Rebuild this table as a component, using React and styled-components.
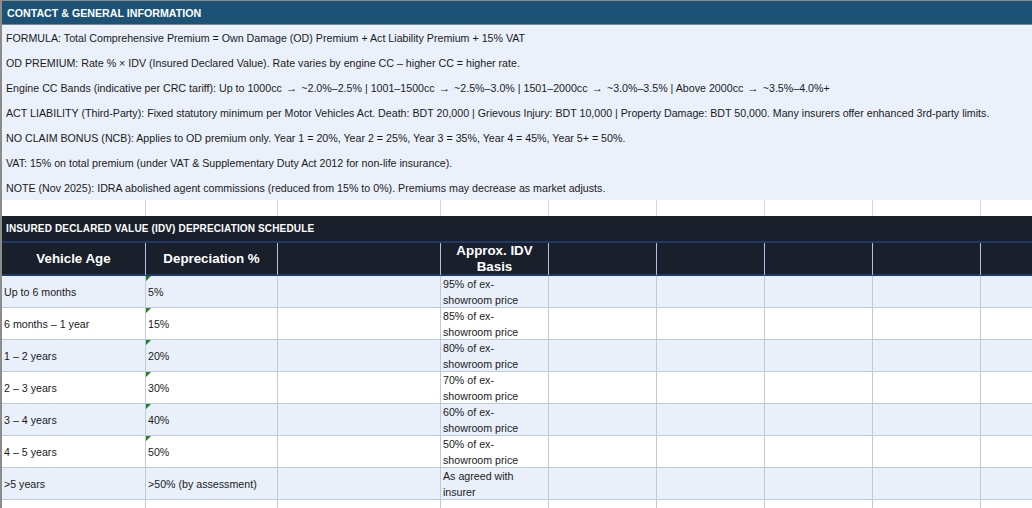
import React from 'react';
import styled, { createGlobalStyle } from 'styled-components';

const GlobalStyle = createGlobalStyle`
  html, body {
    margin: 0;
    padding: 0;
    background: #ffffff;
    overflow: hidden;
  }
  body {
    font-family: "Liberation Sans", Arial, sans-serif;
    color: #1a1a1a;
  }
`;

const Viewport = styled.div`
  width: 1032px;
  height: 508px;
  overflow: hidden;
`;

const Sheet = styled.div`
  display: grid;
  grid-template-columns: 144px 132px 163px repeat(6, 108px);
  width: max-content;
  border-left: 2px solid #8c8c8c;
  border-top: 1px solid #8c8c8c;
`;

const SectionTitle = styled.div`
  grid-column: 1 / -1;
  box-sizing: border-box;
  display: flex;
  align-items: center;
  padding-left: ${p => (p.$dark ? '4px' : '5px')};
  height: ${p => (p.$dark ? '27px' : '24px')};
  background: ${p => (p.$dark ? '#19202b' : '#1b5276')};
  border-bottom: ${p => (p.$dark ? '2px solid #1f3a66' : '1px solid #7d8a94')};
  color: #ffffff;
  font-weight: bold;
  font-size: ${p => (p.$dark ? '10px' : '10.67px')};
  letter-spacing: ${p => (p.$dark ? '0.15px' : '0')};
  white-space: nowrap;
`;

const InfoLine = styled.div`
  grid-column: 1 / -1;
  height: 25px;
  display: flex;
  align-items: center;
  padding-left: 4px;
  background: #eaf1fb;
  font-size: 10.67px;
  white-space: pre;
`;

// the arrow in the sheet renders a bit wider than the stock glyph
const Arrow = styled.span`
  font-size: 11.5px;
  margin: 0 1px;
`;

const SpacerCell = styled.div`
  box-sizing: border-box;
  height: 16px;
  background: #ffffff;
  border-right: 1px solid #d4d4d4;
`;

const HeaderCell = styled.div`
  box-sizing: border-box;
  height: 33px;
  display: flex;
  align-items: center;
  justify-content: center;
  text-align: center;
  background: #19202b;
  border-right: 1px solid #a9c4e6;
  border-bottom: 2px solid #1f3a66;
  color: #ffffff;
  font-weight: bold;
  font-size: 13.33px;
  line-height: 16px;
`;

const DataCell = styled.div`
  position: relative;
  box-sizing: border-box;
  height: 32px;
  display: flex;
  align-items: center;
  padding-left: 2px;
  padding-right: ${p => (p.$wrap ? '8px' : '0')};
  background: ${p => (p.$alt ? '#e9f0fa' : '#ffffff')};
  border-right: 1px solid #b8cce4;
  border-bottom: 1px solid #b8cce4;
  font-size: 10.67px;
  line-height: 16px;
  white-space: ${p => (p.$wrap ? 'normal' : 'nowrap')};

  ${p =>
    p.$flag &&
    `
    &::before {
      content: '';
      position: absolute;
      top: 0;
      left: 0;
      border-top: 5px solid #1e7f1e;
      border-right: 5px solid transparent;
    }
  `}
`;

const info = [
  'FORMULA: Total Comprehensive Premium = Own Damage (OD) Premium + Act Liability Premium + 15% VAT',
  'OD PREMIUM: Rate % × IDV (Insured Declared Value). Rate varies by engine CC – higher CC = higher rate.',
  'Engine CC Bands (indicative per CRC tariff): Up to 1000cc → ~2.0%–2.5% | 1001–1500cc → ~2.5%–3.0% | 1501–2000cc → ~3.0%–3.5% | Above 2000cc → ~3.5%–4.0%+',
  'ACT LIABILITY (Third-Party): Fixed statutory minimum per Motor Vehicles Act. Death: BDT 20,000 | Grievous Injury: BDT 10,000 | Property Damage: BDT 50,000. Many insurers offer enhanced 3rd-party limits.',
  'NO CLAIM BONUS (NCB): Applies to OD premium only. Year 1 = 20%, Year 2 = 25%, Year 3 = 35%, Year 4 = 45%, Year 5+ = 50%.',
  'VAT: 15% on total premium (under VAT & Supplementary Duty Act 2012 for non-life insurance).',
  'NOTE (Nov 2025): IDRA abolished agent commissions (reduced from 15% to 0%). Premiums may decrease as market adjusts.',
];

const schedule = [
  { age: 'Up to 6 months', dep: '5%', basis: '95% of ex-showroom price', flag: true },
  { age: '6 months – 1 year', dep: '15%', basis: '85% of ex-showroom price', flag: true },
  { age: '1 – 2 years', dep: '20%', basis: '80% of ex-showroom price', flag: true },
  { age: '2 – 3 years', dep: '30%', basis: '70% of ex-showroom price', flag: true },
  { age: '3 – 4 years', dep: '40%', basis: '60% of ex-showroom price', flag: true },
  { age: '4 – 5 years', dep: '50%', basis: '50% of ex-showroom price', flag: true },
  { age: '>5 years', dep: '>50% (by assessment)', basis: 'As agreed with insurer', flag: false },
  { age: '', dep: '', basis: '', flag: false },
];

const COLS = 9;
const blanks = n => Array.from({ length: n }, (_, i) => i);

const withArrows = text =>
  text.split('→').flatMap((part, i) => (i === 0 ? [part] : [<Arrow key={i}>→</Arrow>, part]));

const App = () => (
  <Viewport>
    <GlobalStyle />
    <Sheet>
      <SectionTitle>CONTACT &amp; GENERAL INFORMATION</SectionTitle>
      {info.map(line => (
        <InfoLine key={line}>{withArrows(line)}</InfoLine>
      ))}

      {blanks(COLS).map(i => (
        <SpacerCell key={`s${i}`} />
      ))}

      <SectionTitle $dark>INSURED DECLARED VALUE (IDV) DEPRECIATION SCHEDULE</SectionTitle>

      <HeaderCell>Vehicle Age</HeaderCell>
      <HeaderCell>Depreciation %</HeaderCell>
      <HeaderCell />
      <HeaderCell>
        Approx. IDV
        <br />
        Basis
      </HeaderCell>
      {blanks(COLS - 4).map(i => (
        <HeaderCell key={`h${i}`} />
      ))}

      {schedule.map((row, r) => {
        const alt = r % 2 === 0;
        return (
          <React.Fragment key={r}>
            <DataCell $alt={alt}>{row.age}</DataCell>
            <DataCell $alt={alt} $flag={row.flag}>
              {row.dep}
            </DataCell>
            <DataCell $alt={alt} />
            <DataCell $alt={alt} $wrap>
              {row.basis}
            </DataCell>
            {blanks(COLS - 4).map(i => (
              <DataCell $alt={alt} key={`d${i}`} />
            ))}
          </React.Fragment>
        );
      })}
    </Sheet>
  </Viewport>
);

export default App;
